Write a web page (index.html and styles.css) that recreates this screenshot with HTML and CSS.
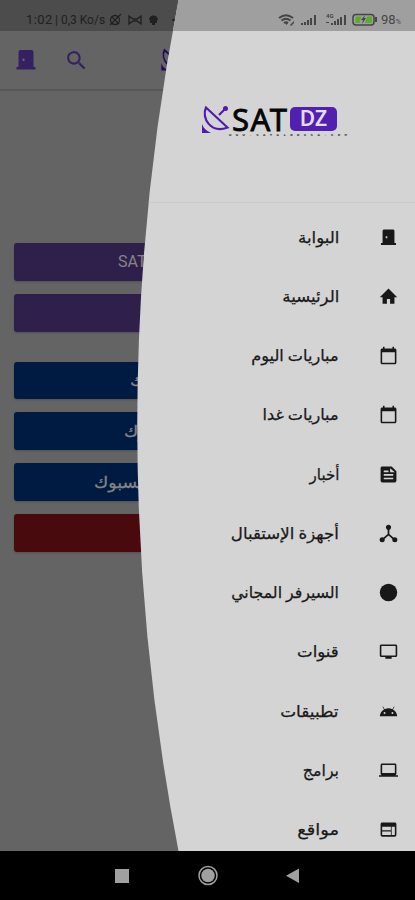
FILE: index.html
```html
<!DOCTYPE html>
<html lang="ar">
<head>
<meta charset="utf-8">
<title>SAT DZ</title>
<link rel="stylesheet" href="styles.css">
</head>
<body>
<svg width="0" height="0" class="defs">
  <symbol id="door" viewBox="0 0 24 24"><path fill-rule="evenodd" d="M19.500 19V4c0-1.100-.9-2-2-2h-11c-1.100 0-2 .9-2 2v15H2.500v2.500h19V19zM8.500 10.500h2V13h-2z"/></symbol>
  <symbol id="home" viewBox="0 0 24 24"><path d="M10 21v-6h4v6h5.500v-8h3.500L12 2 1 13h3.500v8z"/></symbol>
  <symbol id="calendar" viewBox="0 0 24 24"><path d="M20 3h-1V1h-2v2H7V1H5v2H4c-1.100 0-2 .9-2 2v16c0 1.100.9 2 2 2h16c1.100 0 2-.9 2-2V5c0-1.100-.9-2-2-2zm0 18H4V8h16z"/></symbol>
  <symbol id="news" viewBox="0 0 24 24"><path fill-rule="evenodd" d="M16 2H4c-1.100 0-2 .9-2 2v16c0 1.100.9 2 2 2h16c1.100 0 2-.9 2-2V8zM6 7h6v2H6zm12 11H6v-2h12zm0-4.500H6v-2h12zM14 9V4l6 5z"/></symbol>
  <symbol id="hub" viewBox="0 0 24 24"><path d="M12 5v8L4 20M12 13l8 7" fill="none" stroke="currentColor" stroke-width="2.200"/><circle cx="12" cy="4" r="3.200"/><circle cx="4" cy="20" r="3.200"/><circle cx="20" cy="20" r="3.200"/></symbol>
  <symbol id="dot" viewBox="0 0 24 24"><circle cx="12" cy="12" r="11"/></symbol>
  <symbol id="tv" viewBox="0 0 24 24"><path d="M21 3H3c-1.100 0-2 .9-2 2v12c0 1.100.9 2 2 2h5v2h8v-2h5c1.100 0 2-.9 2-2V5c0-1.100-.9-2-2-2zm0 14H3V5h18z"/></symbol>
  <symbol id="android" viewBox="0 0 24 24"><path fill-rule="evenodd" d="M17.600 9.480l1.840-3.180a.4.400 0 0 0-.7-.4l-1.880 3.240a11.400 11.400 0 0 0-9.720 0L5.260 5.900a.4.400 0 0 0-.7.400L6.400 9.480A10.800 10.800 0 0 0 1 18h22a10.800 10.800 0 0 0-5.400-8.520zM7 15.250a1.250 1.250 0 1 1 0-2.500 1.250 1.250 0 0 1 0 2.500zm10 0a1.250 1.250 0 1 1 0-2.500 1.250 1.250 0 0 1 0 2.500z"/></symbol>
  <symbol id="laptop" viewBox="0 0 24 24"><path d="M20 18c1.100 0 2-.9 2-2V5c0-1.100-.9-2-2-2H4c-1.100 0-2 .9-2 2v11c0 1.100.9 2 2 2H0v2h24v-2zM4 5h16v10H4z"/></symbol>
  <symbol id="web" viewBox="0 0 24 24"><path fill-rule="evenodd" d="M20 3H4c-1.100 0-2 .9-2 2v14c0 1.100.9 2 2 2h16c1.100 0 2-.9 2-2V5c0-1.100-.9-2-2-2zm-5 16H4v-4.500h11zm0-6H4V8.500h11zm5 6h-4V8.500h4z"/></symbol>
  <symbol id="search" viewBox="0 0 24 24"><path d="M15.500 14h-.79l-.28-.27A6.500 6.500 0 1 0 13.730 14.430l.27.280v.79l5 4.990L20.490 19zm-6 0a4.500 4.500 0 1 1 0-9 4.500 4.500 0 0 1 0 9z"/></symbol>
  <symbol id="dish" viewBox="0 0 28 30"><g fill="none" stroke="currentColor" stroke-width="2.200"><path d="M4 2.500C-1 13 9 29 25.500 22.500Z"/><path d="M17 10l6-6"/></g><circle cx="23.500" cy="3.500" r="2.500"/><path d="M0 19q2 6 9 9H0z"/></symbol>
</svg>
<div class="phone">
  <div class="page">
    <div class="status">
      <span class="clock">1:02</span><span class="rate">| 0,3 Ko/s</span>
      <svg class="notes" viewBox="0 0 68 14"><g fill="none" stroke="currentColor" stroke-width="1.300"><circle cx="6" cy="7" r="4.500"/><path d="M1 12L12 1M3 4l7 7"/><path d="M20 3v8l4-3h4l4 3V3l-4 3h-4z"/></g><path d="M40 7a4.500 4.500 0 0 1 9 0zM41 7h7v3h-7zM43 3h3v9h-3z"/><circle cx="64.500" cy="7" r="1.300"/></svg>
    </div>
    <div class="toolbar">
      <svg class="t-door"><use href="#door"/></svg>
      <svg class="t-search"><use href="#search"/></svg>
      <svg class="t-logo"><use href="#dish"/></svg>
    </div>
    <div class="buttons">
      <div class="btn purple"><span class="b1">SATALGDZ</span></div>
      <div class="btn purple"></div>
      <div class="btn blue gap"><span class="b2">فيسبوك</span></div>
      <div class="btn blue"><span class="b3">فيسبوك</span></div>
      <div class="btn blue"><span class="b4">فيسبوك</span></div>
      <div class="btn red"></div>
    </div>
  </div>
  <div class="drawer" dir="rtl">
    <div class="d-status" dir="ltr">
      <svg class="signals" viewBox="0 0 102 16">
        <g fill="none" stroke="currentColor" stroke-width="1.900"><path d="M1 6q7-5.500 14 0M3.500 8.500q4.500-3.500 9 0M6 11q2-1.500 4 0"/></g><path d="M7 11h3l-1.500 2zM12 13l4-4v2l-3 3z"/>
        <path d="M23 11h2v2h-2zM26 10h2v3h-2zM29 8h2v5h-2zM32 6h2v7h-2zM36 3h2v10h-2zM53 11h2v2h-2zM56 9h2v4h-2zM59 7h2v6h-2zM62 5h2v8h-2zM66 3h2v10h-2zM48 10h3v1h-3z"/>
        <text x="48" y="6" font-size="6" font-weight="bold">4G</text>
        <rect x="75" y="2.500" width="21" height="10.500" rx="3" fill="none" stroke="currentColor" stroke-width="1.500"/><path d="M97 5h2v5h-2z"/><path fill="#59ad27" d="M77.500 4.500h6l-2 6.500h-4zM89 4.500h5V11h-7z"/><path d="M87 3l-4 5h2l-1 4 4-6h-2z"/>
      </svg><span class="pct">98<small>%</small></span>
    </div>
    <div class="brand" dir="ltr">
      <svg class="dish"><use href="#dish"/></svg>
      <div class="word"><div class="name"><span class="sat">SAT</span><span class="dz">DZ</span></div><div class="site">WWW.SATALGDZSA.COM</div></div>
    </div>
    <div class="menu">
      <div class="item"><svg><use href="#door"/></svg><span class="w4">البوابة</span></div>
      <div class="item"><svg><use href="#home"/></svg><span class="w4">الرئيسية</span></div>
      <div class="item"><svg><use href="#calendar"/></svg><span class="w2">مباريات اليوم</span></div>
      <div class="item"><svg><use href="#calendar"/></svg><span class="w2">مباريات غدا</span></div>
      <div class="item"><svg><use href="#news"/></svg><span class="w0">أخبار</span></div>
      <div class="item"><svg><use href="#hub"/></svg><span class="w4">أجهزة الإستقبال</span></div>
      <div class="item"><svg><use href="#dot"/></svg><span>السيرفر المجاني</span></div>
      <div class="item"><svg><use href="#tv"/></svg><span class="w4">قنوات</span></div>
      <div class="item"><svg><use href="#android"/></svg><span class="w6">تطبيقات</span></div>
      <div class="item"><svg><use href="#laptop"/></svg><span>برامج</span></div>
      <div class="item"><svg><use href="#web"/></svg><span class="w9">مواقع</span></div>
    </div>
  </div>
  <div class="nav">
    <svg viewBox="0 0 415 49"><g fill="#a0a0a0"><path d="M115 18h14v14h-14z"/><circle cx="208" cy="24.500" r="6.800"/><path d="M299 17.500v14.500l-13-7.250z"/></g><circle cx="208" cy="24.500" r="9" fill="none" stroke="#a0a0a0" stroke-width="1.500"/></svg>
  </div>
</div>
</body>
</html>
```
FILE: styles.css
```css
* { box-sizing: border-box; }
body { margin: 0; background: #000; font-family: Roboto, "DejaVu Sans", sans-serif; }
svg { display: block; fill: currentColor; flex: none; }
.defs { position: absolute; }
.phone { position: relative; width: 415px; height: 900px; overflow: hidden; display: flex; flex-direction: column; }
.page { height: 851px; background: #646464; }
.status { height: 31px; background: #4c4c4c; display: flex; align-items: center; padding: 8px 0 0 26px; color: #202020; font-size: 13px; }
.clock { width: 29px; letter-spacing: .4px; }
.rate { width: 54px; font-size: 12px; white-space: nowrap; }
.notes { width: 68px; height: 14px; }
.toolbar { height: 60px; border-bottom: 2px solid #585858; display: flex; align-items: center; color: #35215f; }
.t-door { width: 24px; height: 24px; margin-left: 14px; }
.t-search { width: 25px; height: 25px; margin-left: 26px; }
.t-logo { width: 23px; height: 24px; margin-left: 72px; color: #26085c; }
.buttons { padding: 152px 14px 0; display: flex; flex-direction: column; gap: 13px; }
.btn { height: 37.800px; border-radius: 3px; display: flex; align-items: center; color: #858585; font-size: 16px; white-space: nowrap; box-shadow: 0 1px 2px #4448; }
.purple { background: #2f204b; }
.blue { background: #001b42; }
.red { background: #480a0c; }
.gap { margin-top: 17px; }
.b1 { margin-left: 104px; }
.b2 { margin-left: 116px; }
.b3 { margin-left: 110px; }
.b4 { margin-left: 80px; }
.b2, .b3, .b4 { font-size: 16px; transform: scaleX(1.080); transform-origin: left; -webkit-text-stroke: .3px; }
.drawer { position: absolute; top: 0; right: 0; width: 415px; height: 851px; background: #d4d4d4; color: #181818; clip-path: path("M415 0H178.500Q96 425.500 178.500 851H415Z"); }
.d-status { height: 31px; background: #9f9f9f; display: flex; align-items: center; padding: 8px 0 0 278px; color: #454545; font-size: 13px; }
.signals { width: 102px; height: 16px; }
.pct { margin-left: 1px; }
.pct small { font-size: 7px; }
.brand { height: 172px; border-bottom: 1px solid #cacaca; display: flex; align-items: flex-start; padding: 74px 0 0 202px; color: #501bb0; }
.dish { width: 28px; height: 30px; }
.word { margin-left: 2px; }
.name { display: flex; align-items: center; height: 28px; }
.sat { width: 58px; color: #050505; font: 31px/28px "Noto Sans", sans-serif; letter-spacing: 1.500px; -webkit-text-stroke: .8px; }
.dz { width: 47px; height: 24px; border-radius: 5px; background: #5220b0; color: #e3dcef; text-align: center; font: 600 21px/23px "Noto Sans", sans-serif; }
.site { color: #333; font: bold 4px/4px "Liberation Mono", monospace; letter-spacing: 4.400px; margin: 0 0 0 -3px; white-space: nowrap; }
.menu { padding-top: 4.500px; }
.item { height: 59.250px; display: flex; align-items: center; padding-right: 17px; }
.item svg { width: 19px; height: 19px; }
.item span { margin-right: 40px; font-size: 15.800px; white-space: nowrap; -webkit-text-stroke: .25px; transform-origin: right; }
.item .w0 { transform: scaleX(.95); }
.item .w2 { transform: scaleX(1.020); }
.item .w4 { transform: scaleX(1.050); }
.item .w6 { transform: scaleX(1.070); }
.item .w9 { transform: scaleX(1.130); }
.nav { height: 49px; background: #000; }
.nav svg { width: 415px; height: 49px; }
```
